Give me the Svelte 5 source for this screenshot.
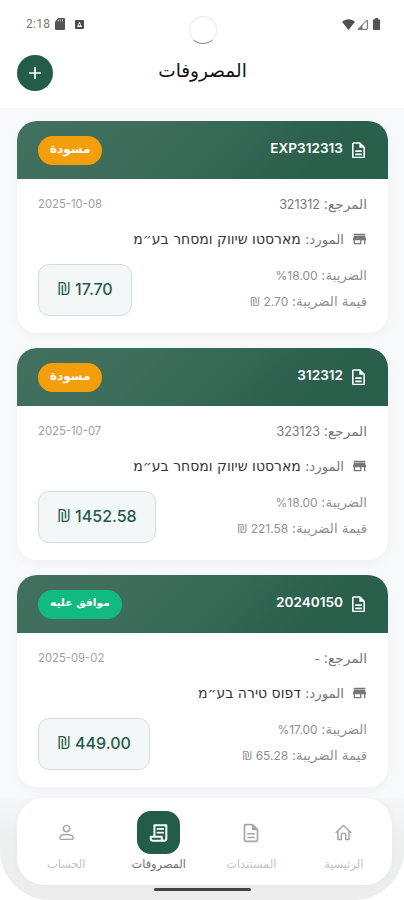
<script>
  const expenses = [
    {
      number: "EXP312313",
      status: "draft",
      statusLabel: "مسودة",
      reference: "321312",
      date: "2025-10-08",
      supplier: "מארסטו שיווק ומסחר בע״מ",
      taxRate: "18.00",
      taxAmount: "2.70",
      total: "17.70",
    },
    {
      number: "312312",
      status: "draft",
      statusLabel: "مسودة",
      reference: "323123",
      date: "2025-10-07",
      supplier: "מארסטו שיווק ומסחר בע״מ",
      taxRate: "18.00",
      taxAmount: "221.58",
      total: "1452.58",
    },
    {
      number: "20240150",
      status: "approved",
      statusLabel: "موافق عليه",
      reference: "-",
      date: "2025-09-02",
      supplier: "דפוס טירה בע״מ",
      taxRate: "17.00",
      taxAmount: "65.28",
      total: "449.00",
    },
  ]

  const tabs = [
    { id: "home", label: "الرئيسية" },
    { id: "documents", label: "المستندات" },
    { id: "expenses", label: "المصروفات" },
    { id: "account", label: "الحساب" },
  ]

  let activeTab = $state("expenses")
</script>

<div class="screen" dir="rtl">
  <div class="top">
    <div class="status-bar" dir="ltr">
      <div class="status-group">
        <span class="clock">2:18</span>
        <svg class="sd" viewBox="0 0 10 12" width="10" height="12">
          <path d="M3.4 0H9a1 1 0 0 1 1 1v10a1 1 0 0 1-1 1H1a1 1 0 0 1-1-1V3.4z" fill="#555" />
          <path d="M3.5 1.4v2M5.5 1.4v2M7.5 1.4v2" stroke="#ccc" stroke-width=".9" />
        </svg>
        <svg class="app-badge" viewBox="0 0 9 9" width="9" height="9">
          <rect width="9" height="9" rx="1" fill="#4c4c4c" />
          <path d="M4.5 1.4 7 7H2z" fill="#fff" />
          <circle cx="4.5" cy="4.8" r=".9" fill="#4c4c4c" />
        </svg>
      </div>
      <span class="camera"></span>
      <div class="status-group">
        <svg viewBox="0 0 13 11" width="13" height="11">
          <path d="M0 2.8C3.6-.6 9.4-.6 13 2.8L6.5 11z" fill="#505050" />
        </svg>
        <svg class="signal" viewBox="0 0 11 11" width="11" height="11">
          <path d="M10.3 1v9.3H1z" fill="none" stroke="#666" stroke-width="1" />
          <path d="M5.5 6v4.3H1z" fill="#777" />
        </svg>
        <svg class="battery" viewBox="0 0 7 12" width="7" height="12">
          <path d="M2 0h3v1.3h1.2a.8.8 0 0 1 .8.8v9a.8.8 0 0 1-.8.9H.8a.8.8 0 0 1-.8-.9v-9a.8.8 0 0 1 .8-.8H2z" fill="#555" />
        </svg>
      </div>
    </div>
    <header class="title-bar">
      <span class="spacer"></span>
      <h1>المصروفات</h1>
      <button class="add" aria-label="إضافة">
        <svg viewBox="0 0 14 14" width="14" height="14">
          <path d="M7 1v12M1 7h12" stroke="#fff" stroke-width="1.7" />
        </svg>
      </button>
    </header>
  </div>

  <main class="list">
    {#each expenses as expense}
      <article class="card">
        <div class="card-header">
          <div class="card-name">
            <svg viewBox="4 2 16 20" width="13" height="16.5">
              <path d="M8 16h8v2H8zm0-4h8v2H8zm6-10H6c-1.1 0-2 .9-2 2v16c0 1.1.89 2 1.99 2H18c1.1 0 2-.9 2-2V8zm4 18H6V4h7v5h5z" fill="#fff" />
            </svg>
            <span class="number">{expense.number}</span>
          </div>
          <span class="status {expense.status}">{expense.statusLabel}</span>
        </div>
        <div class="card-body">
          <div class="row reference-row">
            <span class="reference"><span class="ar">المرجع:</span> {expense.reference}</span>
            <span class="date" dir="ltr">{expense.date}</span>
          </div>
          <div class="row supplier-row">
            <svg viewBox="2 3 20 18" width="13" height="12">
              <path d="M3 4h18v2.5H3zM3.3 7.5h17.4L22 12v2h-1v6h-2v-6h-4v6H3v-6H2v-2zM5 14v4h8v-4z" fill="#777" fill-rule="evenodd" />
            </svg>
            <span class="supplier-label ar">المورد:</span>
            <span class="supplier">{expense.supplier}</span>
          </div>
          <div class="row totals-row">
            <div class="tax">
              <span><span class="ar">الضريبة:</span> <bdi dir="ltr">%{expense.taxRate}</bdi></span>
              <span><span class="ar">قيمة الضريبة:</span> {expense.taxAmount} <span class="shekel">₪</span></span>
            </div>
            <div class="total">{expense.total} <span class="shekel">₪</span></div>
          </div>
        </div>
      </article>
    {/each}
  </main>

  <footer class="bottom">
    <nav>
      {#each tabs as tab}
        <button class="tab" class:active={activeTab === tab.id} onclick={() => (activeTab = tab.id)}>
          <span class="tab-icon">
            {#if tab.id === "home"}
              <svg viewBox="0 0 24 24" width="21" height="21">
                <path d="M3.5 12 12 4l8.5 8M5.7 10.5V20h3.8v-6a1 1 0 0 1 1-1h3a1 1 0 0 1 1 1v6h3.8v-9.5" fill="none" stroke="currentColor" stroke-width="1.7" stroke-linejoin="round" stroke-linecap="round" />
              </svg>
            {:else if tab.id === "documents"}
              <svg viewBox="0 0 24 24" width="22" height="22">
                <path d="M8 16h8v1.7H8zm0-4h8v1.7H8zm6-10H6c-1.1 0-2 .9-2 2v16c0 1.1.89 2 1.99 2H18c1.1 0 2-.9 2-2V8zm4.2 18.2H5.8V3.8H13V9h5.2z" fill="currentColor" />
              </svg>
            {:else if tab.id === "expenses"}
              <svg viewBox="0 0 24 24" width="22" height="22">
                <path d="M7 16V3.5h13V18a2.5 2.5 0 0 1-5 0v-2H3v2a2.5 2.5 0 0 0 2.5 2.5h12" fill="none" stroke="currentColor" stroke-width="2.2" stroke-linejoin="round" />
                <path d="M9.5 7.5h8M9.5 11.5h8" stroke="currentColor" stroke-width="2" />
              </svg>
            {:else}
              <svg viewBox="0 0 24 24" width="21" height="21">
                <circle cx="12" cy="7.5" r="3.6" fill="none" stroke="currentColor" stroke-width="1.6" />
                <path d="M4.5 19v-1.5c0-2 3-3.3 7.5-3.3s7.5 1.3 7.5 3.3V19a.8.8 0 0 1-.8.8H5.3a.8.8 0 0 1-.8-.8z" fill="none" stroke="currentColor" stroke-width="1.6" />
              </svg>
            {/if}
          </span>
          <span class="tab-label">{tab.label}</span>
        </button>
      {/each}
    </nav>
    <span class="home-bar"></span>
  </footer>
</div>

<style>
  :global(body) {
    background: #fff;
  }

  .screen {
    position: relative;
    height: 900px;
    overflow: hidden;
    display: flex;
    flex-direction: column;
    box-sizing: border-box;
    background: #f7f9fa;
    border-radius: 0 0 50px 50px;
    font-family: Inter, "DejaVu Sans", sans-serif;
    color: #666;
  }

  .top {
    flex: none;
    height: 108px;
    background: #fff;
  }

  .status-bar {
    display: grid;
    grid-template-columns: 1fr 28px 1fr;
    height: 50px;
    padding: 0 24px 0 26px;
    box-sizing: border-box;
  }

  .status-group {
    display: flex;
    align-items: center;
    height: 48px;
  }

  .status-group:last-child {
    justify-content: flex-end;
  }

  .clock {
    font-family: Roboto, sans-serif;
    font-size: 12px;
    letter-spacing: 0.3px;
    color: #777;
  }

  .sd {
    margin-left: 5px;
  }

  .app-badge {
    margin-left: 10px;
  }

  .signal {
    margin: 1px 5px 0 2px;
  }

  .camera {
    width: 26px;
    height: 26px;
    margin-top: 16px;
    border: 1px solid #ececec;
    border-bottom-color: #888;
    border-radius: 50%;
  }

  .title-bar {
    display: flex;
    justify-content: space-between;
    align-items: center;
    height: 46px;
    padding: 0 16px 0 17px;
  }

  .spacer,
  .add {
    width: 36px;
    height: 36px;
  }

  h1 {
    margin: 0;
    padding-bottom: 5px;
    font-family: "DejaVu Sans", sans-serif;
    font-size: 18.5px;
    line-height: 24px;
    font-weight: 400;
    color: #111;
  }

  .add {
    display: flex;
    align-items: center;
    justify-content: center;
    padding: 0;
    border: 0;
    border-radius: 50%;
    background: #235c49;
  }

  .list {
    display: flex;
    flex-direction: column;
    gap: 15px;
    padding: 13px 16px 0 17px;
  }

  .card {
    flex: none;
    height: 212px;
    border-radius: 20px;
    overflow: hidden;
    background: #fff;
    box-shadow: 0 3px 12px rgba(0, 0, 0, 0.04);
  }

  .card-header {
    display: flex;
    justify-content: space-between;
    align-items: center;
    height: 58px;
    padding: 0 21px;
    background: linear-gradient(135deg, #42705f 0%, #3c6d5b 35%, #2a5f4c 80%, #27604b 100%);
  }

  .card-name {
    display: flex;
    align-items: center;
    gap: 9px;
    height: 58px;
    padding-right: 2px;
  }

  .number {
    margin-top: -4px;
    font-size: 13.6px;
    font-weight: 600;
    color: #fff;
  }

  .status {
    height: 29px;
    padding: 0 12px;
    border-radius: 15px;
    font-family: "DejaVu Sans", sans-serif;
    font-size: 12px;
    font-weight: 700;
    line-height: 26px;
    color: #fff;
  }

  .draft {
    background: #f59e0b;
  }

  .approved {
    font-size: 10.7px;
    background: #12b981;
  }

  .card-body {
    padding: 14px 21px 0;
  }

  .row {
    display: flex;
    align-items: center;
  }

  .ar {
    font-family: "DejaVu Sans", sans-serif;
  }

  .reference-row {
    justify-content: space-between;
    height: 23px;
    line-height: 23px;
  }

  .reference {
    font-size: 12.5px;
    color: #777;
  }

  .reference .ar {
    font-size: 13.6px;
  }

  .date {
    font-size: 11.3px;
    color: #a0a0a0;
  }

  .supplier-row {
    height: 22px;
    margin-top: 12px;
    padding-right: 1px;
  }

  .supplier-label {
    margin: 0 9px 0 4px;
    font-size: 13.3px;
    color: #777;
  }

  .supplier {
    font-family: "DejaVu Sans", sans-serif;
    font-size: 14px;
    white-space: nowrap;
    color: #333;
  }

  .totals-row {
    justify-content: space-between;
    margin-top: 14px;
  }

  .tax {
    display: flex;
    flex-direction: column;
    gap: 4px;
    margin-top: -2px;
    font-size: 12px;
    line-height: 22px;
    color: #909090;
  }

  .tax .ar {
    font-size: 13.3px;
  }

  .shekel {
    font-family: "Open Sans", "DejaVu Sans", sans-serif;
    font-size: 1.1em;
    line-height: 1;
  }

  .total {
    height: 52px;
    padding: 0 18px;
    border: 1px solid #d3dedb;
    border-radius: 11px;
    box-sizing: border-box;
    background: #f4f7f7;
    font-size: 16px;
    font-weight: 500;
    line-height: 49px;
    color: #235c49;
  }

  .bottom {
    position: absolute;
    inset: auto 0 0;
    height: 102px;
    padding: 0 12px 0 17px;
    background: linear-gradient(#f5f7f8, #eeefef 40%, #ededed);
  }

  nav {
    display: grid;
    grid-template-columns: repeat(4, 1fr);
    height: 87px;
    padding: 0 2px 0 3px;
    box-sizing: border-box;
    border-radius: 27px;
    background: #fff;
    box-shadow: 0 0 8px rgba(0, 0, 0, 0.03);
  }

  .tab {
    display: flex;
    flex-direction: column;
    align-items: center;
    padding: 13px 0 0;
    border: 0;
    background: none;
    color: #a5a5a5;
  }

  .tab-icon {
    display: flex;
    align-items: center;
    justify-content: center;
    width: 43px;
    height: 43px;
    border-radius: 14px;
  }

  .active .tab-icon {
    background: #235c49;
    color: #fff;
  }

  .tab-label {
    margin-top: 2px;
    font-family: "DejaVu Sans", sans-serif;
    font-size: 11.4px;
    line-height: 16px;
    color: #c4c4c4;
  }

  .active .tab-label {
    color: #707070;
  }

  .home-bar {
    display: block;
    width: 97px;
    height: 3px;
    margin: 3px 141px 0 auto;
    border-radius: 2px;
    background: #444;
  }
</style>
